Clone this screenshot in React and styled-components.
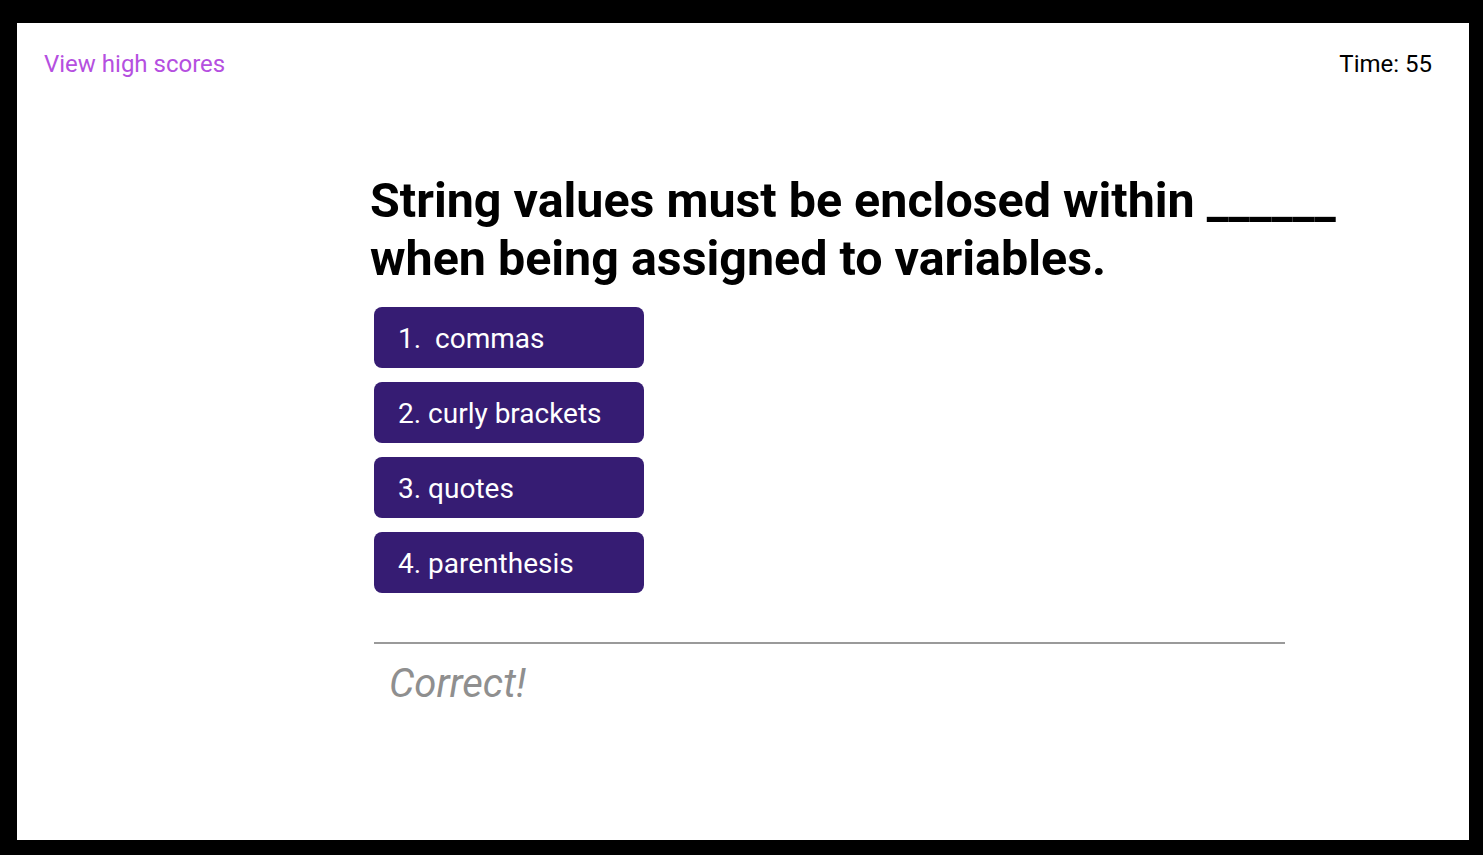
import React from "react";
import styled, { createGlobalStyle } from "styled-components";

const GlobalStyle = createGlobalStyle`
  html, body {
    margin: 0;
    padding: 0;
    background: #000;
  }
  body {
    font-family: Roboto, "Liberation Sans", sans-serif;
  }
`;

const Frame = styled.div`
  padding: 23px 14px 15px 17px;
  height: 855px;
  box-sizing: border-box;
`;

const Page = styled.div`
  background: #fff;
  height: 100%;
  display: flex;
  flex-direction: column;
`;

const Header = styled.header`
  display: flex;
  justify-content: space-between;
  align-items: center;
  padding: 27px 37px 0 27px;
  font-size: 24px;
`;

const HighScores = styled.a`
  color: #b54fe0;
  text-decoration: none;
  cursor: pointer;
`;

const Timer = styled.div`
  color: #000;
`;

const Main = styled.main`
  padding: 94px 0 0 353px;
  width: 916px;
`;

const Question = styled.h1`
  margin: 0 0 20px;
  font-size: 48.4px;
  line-height: 57.6px;
  font-weight: 700;
  color: #000;
  width: 1000px;
`;

const Choices = styled.ol`
  list-style: none;
  margin: 0;
  padding: 0 0 0 4px;
  display: flex;
  flex-direction: column;
  gap: 14px;
`;

const Choice = styled.button`
  width: 270px;
  height: 61px;
  background: #361c73;
  color: #fff;
  border: none;
  border-radius: 8px;
  text-align: left;
  padding: 2px 24px 0;
  font-family: Roboto, "Liberation Sans", sans-serif;
  font-size: 28px;
  white-space: pre;
  cursor: pointer;
`;

const Result = styled.div`
  margin: 49px 0 0 4px;
  border-top: 2px solid #9a9a9a;
  padding: 16px 0 0 15px;
  width: 896px;
  font-size: 40px;
  font-style: italic;
  color: #8f8f8f;
`;

const choices = ["1.  commas", "2. curly brackets", "3. quotes", "4. parenthesis"];

function App() {
  return (
    <>
      <GlobalStyle />
      <Frame>
        <Page>
          <Header>
            <HighScores>View high scores</HighScores>
            <Timer>Time: 55</Timer>
          </Header>
          <Main>
            <Question>
              String values must be enclosed within ______ when being assigned to variables.
            </Question>
            <Choices>
              {choices.map((c) => (
                <li key={c}>
                  <Choice>{c}</Choice>
                </li>
              ))}
            </Choices>
            <Result>Correct!</Result>
          </Main>
        </Page>
      </Frame>
    </>
  );
}

export default App;
